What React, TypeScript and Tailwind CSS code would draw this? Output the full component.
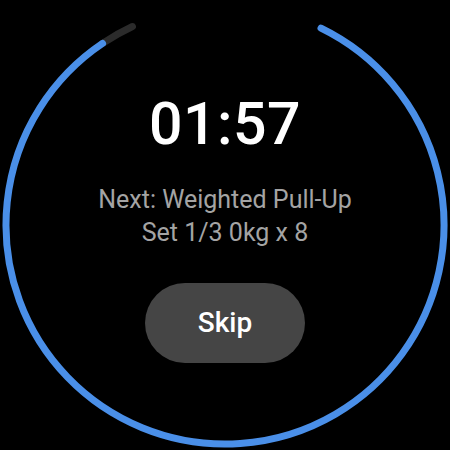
import React from 'react';

const CX = 225;
const CY = 225;
const R = 219;

// angle in degrees, clockwise from 12 o'clock
const pt = (deg: number) => {
  const a = (deg * Math.PI) / 180;
  return [CX + R * Math.sin(a), CY - R * Math.cos(a)];
};

const arc = (from: number, to: number) => {
  const [x1, y1] = pt(from);
  const [x2, y2] = pt(to);
  const large = to - from > 180 ? 1 : 0;
  return `M ${x1} ${y1} A ${R} ${R} 0 ${large} 1 ${x2} ${y2}`;
};

const Ring = () => (
  <svg className="absolute inset-0" width={450} height={450} viewBox="0 0 450 450">
    <path d={arc(326, 335)} stroke="#2b2b2b" strokeWidth={7} fill="none" strokeLinecap="round" />
    <path d={arc(26, 326)} stroke="#4a8fe8" strokeWidth={7} fill="none" strokeLinecap="round" />
  </svg>
);

export default function App() {
  return (
    <div className="relative w-[450px] h-[450px] bg-black overflow-hidden" style={{ fontFamily: 'Roboto, "Noto Sans", sans-serif' }}>
      <Ring />
      <div className="relative flex flex-col items-center pt-[94px]">
        <div className="text-white text-[59px] leading-none font-medium tracking-[0.5px]">01:57</div>
        <div className="mt-[30px] text-[#a4a4a4] text-[25px] leading-[33px] text-center">
          <div>Next: Weighted Pull-Up</div>
          <div>Set 1/3 0kg x 8</div>
        </div>
        <button className="mt-[34px] w-[160px] h-[80px] rounded-full bg-[#454545] text-white text-[28px] font-medium">
          Skip
        </button>
      </div>
    </div>
  );
}
